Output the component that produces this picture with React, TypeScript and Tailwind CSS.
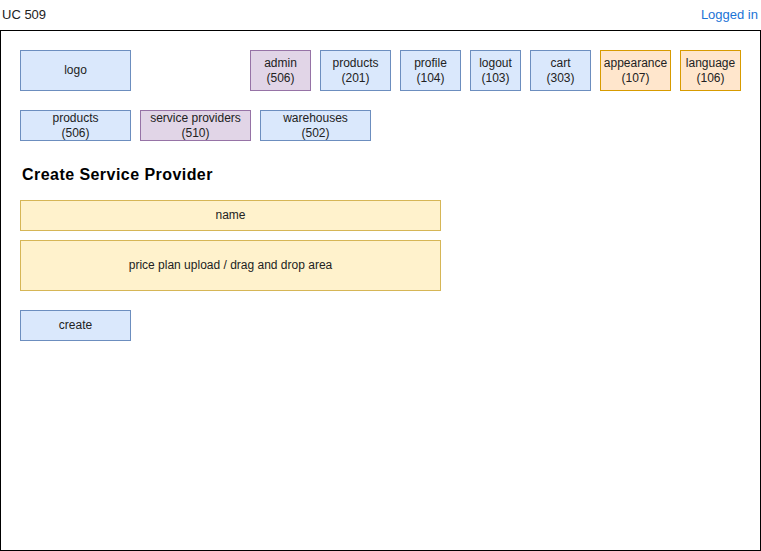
const blue = "border-[#6c8ebf] bg-[#dae8fc]"
const purple = "border-[#9673a6] bg-[#e1d5e7]"
const orange = "border-[#d79b00] bg-[#ffe6cc]"
const yellow = "border-[#d6b656] bg-[#fff2cc]"

type BoxProps = {
  label: string
  sub?: string
  w: string
  h: string
  tone: string
}

const Box = ({ label, sub, w, h, tone }: BoxProps) => (
  <div
    className={`${w} ${h} ${tone} border flex flex-col items-center justify-center text-center text-[12px] leading-[15px] text-[#222]`}
  >
    <span>{label}</span>
    {sub && <span>{sub}</span>}
  </div>
)

export default function App() {
  return (
    <div className="w-[761px] h-[551px] bg-white font-['Liberation_Sans',Arial,sans-serif]">
      <div className="h-[30px] flex items-center justify-between pl-[2px] pr-[3px] text-[13px]">
        <span className="text-[#222]">UC 509</span>
        <span className="text-[#1b73d6]">Logged in</span>
      </div>

      <div className="w-[761px] h-[521px] border border-black pl-[19px] pt-[19px]">
        <div className="flex">
          <Box label="logo" w="w-[111px]" h="h-[41px]" tone={blue} />
          <div className="flex gap-[9px] ml-[119px]">
            <Box label="admin" sub="(506)" w="w-[61px]" h="h-[41px]" tone={purple} />
            <Box label="products" sub="(201)" w="w-[71px]" h="h-[41px]" tone={blue} />
            <Box label="profile" sub="(104)" w="w-[61px]" h="h-[41px]" tone={blue} />
            <Box label="logout" sub="(103)" w="w-[51px]" h="h-[41px]" tone={blue} />
            <Box label="cart" sub="(303)" w="w-[61px]" h="h-[41px]" tone={blue} />
            <Box label="appearance" sub="(107)" w="w-[71px]" h="h-[41px]" tone={orange} />
            <Box label="language" sub="(106)" w="w-[61px]" h="h-[41px]" tone={orange} />
          </div>
        </div>

        <div className="flex gap-[9px] mt-[19px]">
          <Box label="products" sub="(506)" w="w-[111px]" h="h-[31px]" tone={blue} />
          <Box label="service providers" sub="(510)" w="w-[111px]" h="h-[31px]" tone={purple} />
          <Box label="warehouses" sub="(502)" w="w-[111px]" h="h-[31px]" tone={blue} />
        </div>

        <h1 className="mt-[24px] pl-[2px] h-[20px] leading-[20px] text-[16px] font-bold tracking-[0.45px] text-black">
          Create Service Provider
        </h1>

        <div className="mt-[15px]">
          <Box label="name" w="w-[421px]" h="h-[31px]" tone={yellow} />
        </div>
        <div className="mt-[9px]">
          <Box label="price plan upload / drag and drop area" w="w-[421px]" h="h-[51px]" tone={yellow} />
        </div>
        <div className="mt-[19px]">
          <Box label="create" w="w-[111px]" h="h-[31px]" tone={blue} />
        </div>
      </div>
    </div>
  )
}
